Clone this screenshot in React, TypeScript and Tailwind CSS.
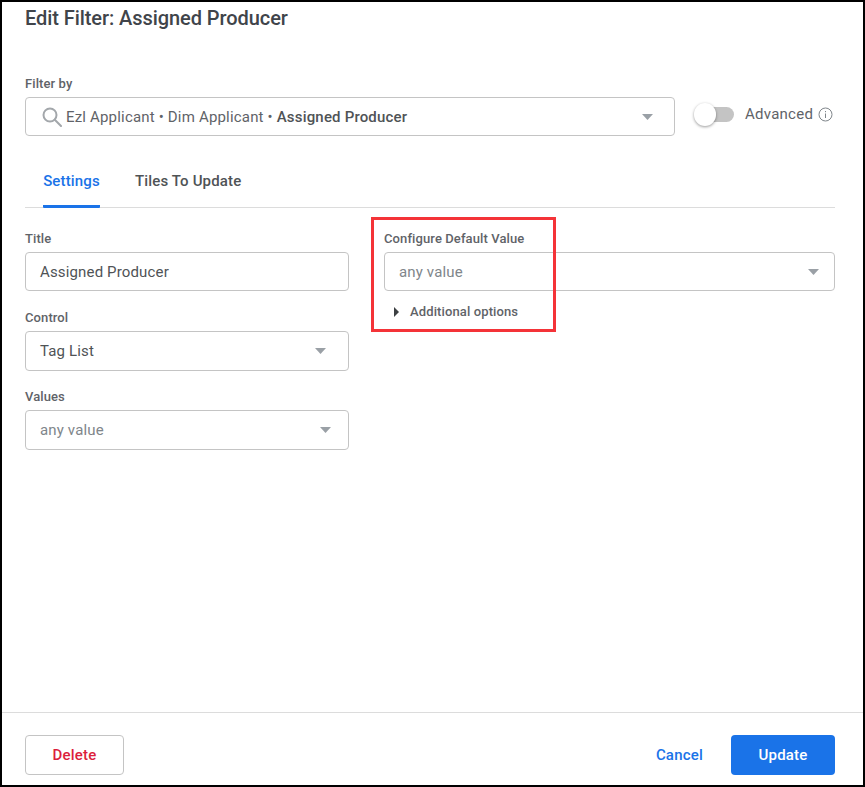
import React from 'react';

const Caret: React.FC = () => (
  <svg width="11" height="6" viewBox="0 0 11 6" fill="#9aa0a6" className="shrink-0">
    <path d="M0 0h11L5.5 6z" />
  </svg>
);

const Label: React.FC<{ children: React.ReactNode }> = ({ children }) => (
  <div className="pt-[1px] text-[13px] leading-[14px] tracking-[0.1px] font-medium text-[#5f6368] mb-[6px]">{children}</div>
);

const Field: React.FC<{ text: string; muted?: boolean; caret?: boolean; short?: boolean; caretPad?: string }> = ({
  text,
  muted,
  caret,
  short,
  caretPad = 'pr-[15px]',
}) => (
  <div className={`${short ? 'h-[39px]' : 'h-[40px]'} ${caretPad} border border-[#c4c4c4] rounded-[4px] pl-[14px] flex items-center justify-between bg-white`}>
    <span className={`${short ? 'pt-[2px]' : ''} text-[15px] tracking-[0.15px] ${muted ? 'text-[#80868b]' : 'text-[#4f5356]'}`}>{text}</span>
    {caret && <Caret />}
  </div>
);

const App: React.FC = () => {
  return (
    <div className="relative w-[865px] h-[787px] border-2 border-black bg-white flex flex-col font-['Roboto',sans-serif]">
      <div className="flex-1 pl-[23px] pr-[28px]">
        <h1 className="text-[20px] leading-[24px] mt-[4px] tracking-[-0.07px] font-medium text-[#40444a]">Edit Filter: Assigned Producer</h1>

        <div className="mt-[47px] text-[13px] leading-[14px] tracking-[0.1px] text-[#5f6368] font-medium">Filter by</div>
        <div className="flex items-center mt-[6px]">
          <div className="w-[650px] h-[39px] border border-[#c4c4c4] rounded-[4px] flex items-center pl-[16px] pr-[21px]">
            <svg width="20" height="20" viewBox="0 0 20 20" fill="none" stroke="#a3a7ab" strokeWidth="2" className="mr-[4px] shrink-0">
              <circle cx="8" cy="8" r="6.5" />
              <path d="M12.8 12.8 19 19" strokeLinecap="round" />
            </svg>
            <span className="pt-[2px] text-[15px] tracking-[0.18px] text-[#5f6368]">
              Ezl Applicant • Dim Applicant • <span className="font-medium text-[#4f5356]">Assigned Producer</span>
            </span>
            <span className="ml-auto flex">
              <Caret />
            </span>
          </div>
          <div className="ml-[18px] relative w-[41px] h-[23px] -mt-[5px] flex items-center">
            <div className="ml-[11px] w-[30px] h-[15px] rounded-full bg-[#c4c4c4]" />
            <div className="absolute left-[1px] top-0 w-[22px] h-[23px] rounded-full bg-white shadow-[0_1px_3px_rgba(0,0,0,0.4)]" />
          </div>
          <span className="ml-[11px] -mt-[5px] text-[15px] tracking-[0.25px] text-[#5f6368]">Advanced</span>
          <svg width="15" height="15" viewBox="0 0 15 15" fill="none" stroke="#80868b" className="ml-[5px] -mt-[5px]">
            <circle cx="7.5" cy="7.5" r="6.5" />
            <path d="M7.5 6.5v4.5M7.5 4v1.2" />
          </svg>
        </div>

        <div className="mt-[26px] h-[46px] flex border-b border-[#dcdcdc] pb-0">
          <div className="ml-[18px] w-[57px] h-[46px] border-b-[3px] border-[#1a73e8] rounded-[1px] text-[15px] tracking-[0.15px] leading-[38px] font-medium text-[#1a73e8] text-center whitespace-nowrap">
            Settings
          </div>
          <div className="ml-[35px] text-[15px] tracking-[0.15px] leading-[38px] font-medium text-[#4f5356]">Tiles To Update</div>
        </div>

        <div className="flex mt-[23px]">
          <div className="w-[324px] mr-[35px] flex flex-col">
            <Label>Title</Label>
            <Field text="Assigned Producer" short />
            <div className="mt-[19px]">
              <Label>Control</Label>
              <Field text="Tag List" caret caretPad="pr-[22px]" />
            </div>
            <div className="mt-[18px]">
              <Label>Values</Label>
              <Field text="any value" muted caret caretPad="pr-[17px]" />
            </div>
          </div>
          <div className="flex-1">
            <Label>Configure Default Value</Label>
            <Field text="any value" muted caret short />
            <div className="flex items-center mt-[14px] ml-[10px]">
              <span className="w-0 h-0 border-y-[5px] border-y-transparent border-l-[5px] border-l-[#3c4043]" />
              <span className="ml-[11px] text-[13px] leading-[14px] tracking-[0.12px] font-medium text-[#5f6368]">Additional options</span>
            </div>
          </div>
        </div>
      </div>

      <div className="h-[73px] border-t border-[#dcdcdc] pl-[23px] pr-[28px] pt-[22px] flex justify-between items-start">
        <button className="w-[99px] h-[40px] border border-[#c4c4c4] rounded-[4px] text-[15px] tracking-[0.2px] font-medium text-[#dc1e3c]">
          Delete
        </button>
        <div className="flex items-center">
          <span className="text-[15px] tracking-[0.2px] font-medium text-[#1a73e8] mr-[28px]">Cancel</span>
          <button className="w-[104px] h-[40px] rounded-[4px] bg-[#1a73e8] text-[15px] tracking-[0.2px] font-medium text-white">Update</button>
        </div>
      </div>

      <div className="absolute left-[369px] top-[215px] w-[185px] h-[115px] border-[3px] border-[#f43338]" />
    </div>
  );
};

export default App;
